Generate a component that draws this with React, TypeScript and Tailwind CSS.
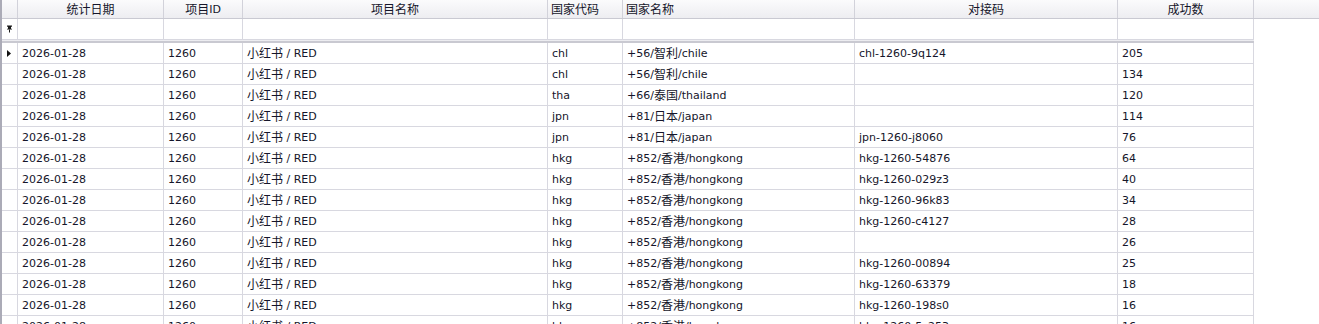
import React from "react";

type Row = [string, string, string, string, string, string, string];

const rows: Row[] = [
  ["2026-01-28", "1260", "小红书 / RED", "chl", "+56/智利/chile", "chl-1260-9q124", "205"],
  ["2026-01-28", "1260", "小红书 / RED", "chl", "+56/智利/chile", "", "134"],
  ["2026-01-28", "1260", "小红书 / RED", "tha", "+66/泰国/thailand", "", "120"],
  ["2026-01-28", "1260", "小红书 / RED", "jpn", "+81/日本/japan", "", "114"],
  ["2026-01-28", "1260", "小红书 / RED", "jpn", "+81/日本/japan", "jpn-1260-j8060", "76"],
  ["2026-01-28", "1260", "小红书 / RED", "hkg", "+852/香港/hongkong", "hkg-1260-54876", "64"],
  ["2026-01-28", "1260", "小红书 / RED", "hkg", "+852/香港/hongkong", "hkg-1260-029z3", "40"],
  ["2026-01-28", "1260", "小红书 / RED", "hkg", "+852/香港/hongkong", "hkg-1260-96k83", "34"],
  ["2026-01-28", "1260", "小红书 / RED", "hkg", "+852/香港/hongkong", "hkg-1260-c4127", "28"],
  ["2026-01-28", "1260", "小红书 / RED", "hkg", "+852/香港/hongkong", "", "26"],
  ["2026-01-28", "1260", "小红书 / RED", "hkg", "+852/香港/hongkong", "hkg-1260-00894", "25"],
  ["2026-01-28", "1260", "小红书 / RED", "hkg", "+852/香港/hongkong", "hkg-1260-63379", "18"],
  ["2026-01-28", "1260", "小红书 / RED", "hkg", "+852/香港/hongkong", "hkg-1260-198s0", "16"],
  ["2026-01-28", "1260", "小红书 / RED", "hkg", "+852/香港/hongkong", "hkg-1260-5z253", "16"],
  ["2026-01-28", "1260", "小红书 / RED", "hkg", "+852/香港/hongkong", "hkg-1260-7k211", "15"],
];

const widths = [
  "w-[146px]",
  "w-[79px]",
  "w-[305px]",
  "w-[75px]",
  "w-[232px]",
  "w-[263px]",
  "w-[136px]",
];

const headers: { t: string; align: string }[] = [
  { t: "统计日期", align: "justify-center" },
  { t: "项目ID", align: "justify-center" },
  { t: "项目名称", align: "justify-center" },
  { t: "国家代码", align: "justify-start pl-[3px]" },
  { t: "国家名称", align: "justify-start pl-[3px]" },
  { t: "对接码", align: "justify-center" },
  { t: "成功数", align: "justify-center" },
];

function T({ s }: { s: string }) {
  const parts = s.split(/([\u4e00-\u9fff]+)/);
  return (
    <>
      {parts.map((p, i) =>
        /[\u4e00-\u9fff]/.test(p) ? (
          <span key={i} className="text-[12px] font-['Noto_Sans_CJK_SC',sans-serif]">
            {p}
          </span>
        ) : (
          <span key={i} className="whitespace-pre">{p}</span>
        )
      )}
    </>
  );
}

export default function App() {
  return (
    <div className="w-[1319px] h-[324px] overflow-hidden bg-white flex text-[11px] text-[#15152a] font-['DejaVu_Sans','Noto_Sans_CJK_SC',sans-serif] leading-none">
      <div className="w-[2px] shrink-0 bg-[#ababb7]" />
      <div className="flex-1 flex flex-col">
        {/* header */}
        <div className="flex h-[19px] shrink-0 border-b border-[#c9c9d2] bg-linear-to-b from-[#fbfbfc] to-[#ededf1]">
          <div className="w-[16px] shrink-0 border-r border-[#d2d2da]" />
          {headers.map((h, i) => (
            <div
              key={i}
              className={`${widths[i]} shrink-0 border-r border-[#d2d2da] flex items-center ${h.align}`}
            >
              <T s={h.t} />
            </div>
          ))}
          <div className="flex-1" />
        </div>
        {/* filter row */}
        <div className="flex h-[21px] shrink-0">
          <div className="flex border-b border-[#d8d8e0]">
            <div className="w-[16px] shrink-0 border-r border-[#d8d8e0] flex items-center justify-center">
              <svg width="7" height="8" viewBox="0 0 7 8" className="ml-[-1px]">
                <path d="M1 0.5 H6 V1.5 L5 2 V3.5 L6 4 V4.5 H1 V4 L2 3.5 V2 L1 1.5 Z" fill="#1a1a1a" />
                <rect x="3" y="4.5" width="1" height="3" fill="#1a1a1a" />
              </svg>
            </div>
            {widths.map((w, i) => (
              <div key={i} className={`${w} shrink-0 border-r border-[#d8d8e0]`} />
            ))}
          </div>
        </div>
        {/* separator */}
        <div className="w-[1252px] h-[3px] shrink-0 flex flex-col">
          <div className="h-[1px] bg-[#ececf0]" />
          <div className="h-[2px] bg-[#c9c9d1]" />
        </div>
        {/* data rows */}
        {rows.map((r, ri) => (
          <div key={ri} className="flex h-[21px] shrink-0 w-[1252px] border-b border-[#d8d8e0]">
            <div className="w-[16px] shrink-0 border-r border-[#d8d8e0] flex items-center justify-center">
              {ri === 0 && (
                <svg width="4" height="7" viewBox="0 0 4 7" className="ml-[-1px]">
                  <path d="M0 0 L4 3.5 L0 7 Z" fill="#111" />
                </svg>
              )}
            </div>
            {r.map((c, ci) => (
              <div
                key={ci}
                className={`${widths[ci]} shrink-0 border-r border-[#d8d8e0] flex items-center pl-[4px] overflow-hidden`}
              >
                <T s={c} />
              </div>
            ))}
          </div>
        ))}
      </div>
    </div>
  );
}
